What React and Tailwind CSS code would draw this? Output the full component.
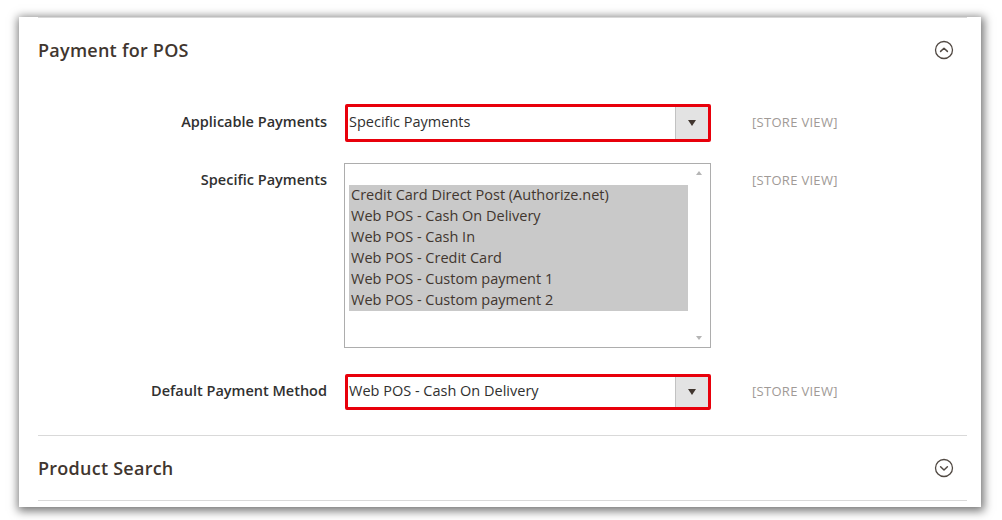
const PAYMENTS = [
  "Credit Card Direct Post (Authorize.net)",
  "Web POS - Cash On Delivery",
  "Web POS - Cash In",
  "Web POS - Credit Card",
  "Web POS - Custom payment 1",
  "Web POS - Custom payment 2",
];

const CircleChevron = ({ up }) => (
  <svg width="20" height="20" viewBox="0 0 20 20" fill="none">
    <circle cx="10" cy="10" r="8.5" stroke="#514943" strokeWidth="1.3" />
    {up ? (
      <path d="M6.6 11.4 L10 8.2 L13.4 11.4" stroke="#514943" strokeWidth="1.5" strokeLinecap="round" strokeLinejoin="round" />
    ) : (
      <path d="M6.6 8.8 L10 12 L13.4 8.8" stroke="#514943" strokeWidth="1.5" strokeLinecap="round" strokeLinejoin="round" />
    )}
  </svg>
);

const Scope = ({ className = "" }) => (
  <span className={`text-[13px] text-[#a09a96] uppercase tracking-[0.3px] ${className}`}>[Store View]</span>
);

const Label = ({ children, className = "" }) => (
  <div className={`w-[289px] shrink-0 text-right text-[14.5px] font-semibold text-[#303030] ${className}`}>
    {children}
  </div>
);

const RedSelect = ({ value, height }) => (
  <div className={`w-[366px] ${height} flex border-[3px] border-[#e8000b] rounded-[2px] bg-white`}>
    <div className="flex-1 flex items-center pl-[1px] pb-[2px] text-[14.5px] text-[#303030]">{value}</div>
    <div className="w-[33px] flex items-center justify-center bg-[#e3e3e3] border-l border-[#c2c2c2]">
      <span className="block w-0 h-0 border-l-[4.5px] border-r-[4.5px] border-t-[6px] border-l-transparent border-r-transparent border-t-[#41362f]" />
    </div>
  </div>
);

export default function App() {
  return (
    <div className="w-[1002px] h-[520px] bg-white pt-[14px] pl-[19px] font-['Open_Sans',sans-serif] overflow-hidden">
      <div className="w-[962px] h-[490px] bg-white pl-[19px] pr-[14px] shadow-[1px_2px_9px_2px_rgba(0,0,0,0.55)]">
        <div className="mt-[3px] border-t border-[#d9d9d9]" />

        <div className="h-[66px] flex items-center justify-between pb-[2px]">
          <h2 className="text-[18px] font-semibold text-[#41362f] tracking-[0.25px]">Payment for POS</h2>
          <div className="mr-[13px]"><CircleChevron up /></div>
        </div>

        <div className="mt-[20px] flex items-center">
          <Label className="pb-[3px]">Applicable Payments</Label>
          <div className="ml-[18px]"><RedSelect value="Specific Payments" height="h-[38px]" /></div>
          <Scope className="ml-[41px]" />
        </div>

        <div className="mt-[21px] flex items-start">
          <Label className="pt-[6px]">Specific Payments</Label>
          <div className="ml-[17px] w-[367px] h-[185px] border border-[#adadad] flex bg-white">
            <div className="flex-1 pl-[4px] pt-[21px]">
              <div className="bg-[#c9c9c9]">
                {PAYMENTS.map((p) => (
                  <div key={p} className="h-[21px] leading-[20px] pl-[2px] text-[14.5px] text-[#41362f]">{p}</div>
                ))}
              </div>
            </div>
            <div className="w-[22px] flex flex-col items-center justify-between py-[7px]">
              <span className="block w-0 h-0 border-l-[3.5px] border-r-[3.5px] border-b-[4px] border-l-transparent border-r-transparent border-b-[#b5b5b5]" />
              <span className="block w-0 h-0 border-l-[3.5px] border-r-[3.5px] border-t-[4px] border-l-transparent border-r-transparent border-t-[#b5b5b5]" />
            </div>
          </div>
          <Scope className="ml-[41px] pt-[8px]" />
        </div>

        <div className="mt-[26px] flex items-center">
          <Label className="pb-[2px]">Default Payment Method</Label>
          <div className="ml-[18px]"><RedSelect value="Web POS - Cash On Delivery" height="h-[36px]" /></div>
          <Scope className="ml-[41px]" />
        </div>

        <div className="mt-[25px] border-t border-[#d9d9d9]" />

        <div className="h-[64px] flex items-center justify-between">
          <h2 className="text-[18px] font-semibold text-[#41362f] tracking-[0.25px]">Product Search</h2>
          <div className="mr-[13px]"><CircleChevron /></div>
        </div>

        <div className="border-t border-[#d9d9d9]" />
      </div>
    </div>
  );
}
